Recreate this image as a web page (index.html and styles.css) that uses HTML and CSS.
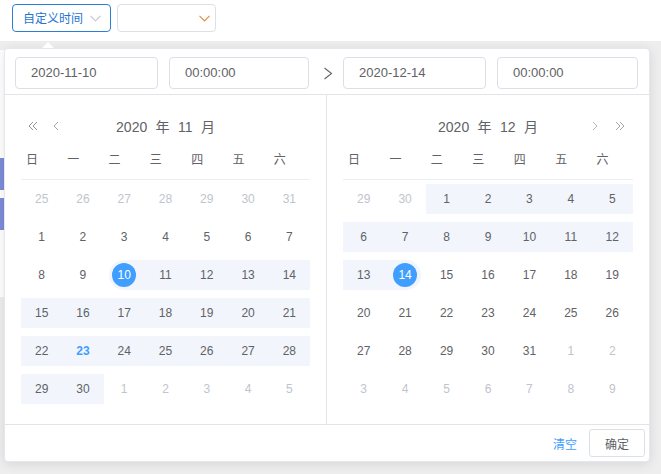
FILE: index.html
```html
<!DOCTYPE html>
<html lang="zh-CN">
<head>
<meta charset="utf-8">
<title>日期范围选择</title>
<link rel="stylesheet" href="styles.css">
</head>
<body>
<div class="toolbar">
  <button class="sel sel-active"><span>自定义时间</span><svg class="chev" width="11" height="7" viewBox="0 0 11 7"><path d="M0.5 0.8 L5.5 5.8 L10.5 0.8" fill="none" stroke="#c0c4cc" stroke-width="1.1"/></svg></button>
  <button class="sel sel-empty"><svg class="chev" width="11" height="7" viewBox="0 0 11 7"><path d="M0.5 0.8 L5.5 5.8 L10.5 0.8" fill="none" stroke="#e0913e" stroke-width="1.2"/></svg></button>
</div>
<div class="stage">
  <div class="page-card">
    <div class="pc-bar"></div>
    <div class="pc-bar"></div>
  </div>
  <div class="picker">
    <div class="arrow"></div>
    <div class="editors">
      <div class="ed-group">
        <div class="ed ed-date">2020-11-10</div>
        <div class="ed ed-time">00:00:00</div>
      </div>
      <div class="ed-sep"><svg width="10" height="13" viewBox="0 0 10 13"><path d="M1.5 1 L8.5 6.5 L1.5 12" fill="none" stroke="#606266" stroke-width="1.1"/></svg></div>
      <div class="ed-group">
        <div class="ed ed-date">2020-12-14</div>
        <div class="ed ed-time2">00:00:00</div>
      </div>
    </div>
    <div class="panels">
      <div class="content is-left">
        <div class="cal-head">
          <div class="nav nav-l">
            <svg width="10" height="10" viewBox="0 0 10 10"><path d="M5 1 L1 5 L5 9 M9 1 L5 5 L9 9" fill="none" stroke="#8f9399" stroke-width="1"/></svg>
            <svg width="6" height="10" viewBox="0 0 6 10"><path d="M5 1 L1 5 L5 9" fill="none" stroke="#a3a6ad" stroke-width="1"/></svg>
          </div>
          <div class="cal-title">2020 年 11 月</div>
          <div></div>
        </div>
        <div class="week"><span>日</span><span>一</span><span>二</span><span>三</span><span>四</span><span>五</span><span>六</span></div>
        <div class="days">
          <div class="d o"><div><span>25</span></div></div>
          <div class="d o"><div><span>26</span></div></div>
          <div class="d o"><div><span>27</span></div></div>
          <div class="d o"><div><span>28</span></div></div>
          <div class="d o"><div><span>29</span></div></div>
          <div class="d o"><div><span>30</span></div></div>
          <div class="d o"><div><span>31</span></div></div>

          <div class="d"><div><span>1</span></div></div>
          <div class="d"><div><span>2</span></div></div>
          <div class="d"><div><span>3</span></div></div>
          <div class="d"><div><span>4</span></div></div>
          <div class="d"><div><span>5</span></div></div>
          <div class="d"><div><span>6</span></div></div>
          <div class="d"><div><span>7</span></div></div>

          <div class="d"><div><span>8</span></div></div>
          <div class="d"><div><span>9</span></div></div>
          <div class="d r s"><div><span>10</span></div></div>
          <div class="d r"><div><span>11</span></div></div>
          <div class="d r"><div><span>12</span></div></div>
          <div class="d r"><div><span>13</span></div></div>
          <div class="d r"><div><span>14</span></div></div>

          <div class="d r"><div><span>15</span></div></div>
          <div class="d r"><div><span>16</span></div></div>
          <div class="d r"><div><span>17</span></div></div>
          <div class="d r"><div><span>18</span></div></div>
          <div class="d r"><div><span>19</span></div></div>
          <div class="d r"><div><span>20</span></div></div>
          <div class="d r"><div><span>21</span></div></div>

          <div class="d r"><div><span>22</span></div></div>
          <div class="d r t"><div><span>23</span></div></div>
          <div class="d r"><div><span>24</span></div></div>
          <div class="d r"><div><span>25</span></div></div>
          <div class="d r"><div><span>26</span></div></div>
          <div class="d r"><div><span>27</span></div></div>
          <div class="d r"><div><span>28</span></div></div>

          <div class="d r"><div><span>29</span></div></div>
          <div class="d r"><div><span>30</span></div></div>
          <div class="d o"><div><span>1</span></div></div>
          <div class="d o"><div><span>2</span></div></div>
          <div class="d o"><div><span>3</span></div></div>
          <div class="d o"><div><span>4</span></div></div>
          <div class="d o"><div><span>5</span></div></div>
        </div>
      </div>
      <div class="content is-right">
        <div class="cal-head">
          <div></div>
          <div class="cal-title">2020 年 12 月</div>
          <div class="nav nav-r">
            <svg width="6" height="10" viewBox="0 0 6 10"><path d="M1 1 L5 5 L1 9" fill="none" stroke="#b4b7bd" stroke-width="1"/></svg>
            <svg width="10" height="10" viewBox="0 0 10 10"><path d="M1 1 L5 5 L1 9 M5 1 L9 5 L5 9" fill="none" stroke="#a3a6ad" stroke-width="1"/></svg>
          </div>
        </div>
        <div class="week"><span>日</span><span>一</span><span>二</span><span>三</span><span>四</span><span>五</span><span>六</span></div>
        <div class="days">
          <div class="d o"><div><span>29</span></div></div>
          <div class="d o"><div><span>30</span></div></div>
          <div class="d r"><div><span>1</span></div></div>
          <div class="d r"><div><span>2</span></div></div>
          <div class="d r"><div><span>3</span></div></div>
          <div class="d r"><div><span>4</span></div></div>
          <div class="d r"><div><span>5</span></div></div>

          <div class="d r"><div><span>6</span></div></div>
          <div class="d r"><div><span>7</span></div></div>
          <div class="d r"><div><span>8</span></div></div>
          <div class="d r"><div><span>9</span></div></div>
          <div class="d r"><div><span>10</span></div></div>
          <div class="d r"><div><span>11</span></div></div>
          <div class="d r"><div><span>12</span></div></div>

          <div class="d r"><div><span>13</span></div></div>
          <div class="d r e"><div><span>14</span></div></div>
          <div class="d"><div><span>15</span></div></div>
          <div class="d"><div><span>16</span></div></div>
          <div class="d"><div><span>17</span></div></div>
          <div class="d"><div><span>18</span></div></div>
          <div class="d"><div><span>19</span></div></div>

          <div class="d"><div><span>20</span></div></div>
          <div class="d"><div><span>21</span></div></div>
          <div class="d"><div><span>22</span></div></div>
          <div class="d"><div><span>23</span></div></div>
          <div class="d"><div><span>24</span></div></div>
          <div class="d"><div><span>25</span></div></div>
          <div class="d"><div><span>26</span></div></div>

          <div class="d"><div><span>27</span></div></div>
          <div class="d"><div><span>28</span></div></div>
          <div class="d"><div><span>29</span></div></div>
          <div class="d"><div><span>30</span></div></div>
          <div class="d"><div><span>31</span></div></div>
          <div class="d o"><div><span>1</span></div></div>
          <div class="d o"><div><span>2</span></div></div>

          <div class="d o"><div><span>3</span></div></div>
          <div class="d o"><div><span>4</span></div></div>
          <div class="d o"><div><span>5</span></div></div>
          <div class="d o"><div><span>6</span></div></div>
          <div class="d o"><div><span>7</span></div></div>
          <div class="d o"><div><span>8</span></div></div>
          <div class="d o"><div><span>9</span></div></div>
        </div>
      </div>
    </div>
    <div class="footer">
      <span class="link-btn">清空</span>
      <button class="ok-btn">确定</button>
    </div>
  </div>
</div>
</body>
</html>
```
FILE: styles.css
```css
* { box-sizing: border-box; }

html, body {
  margin: 0;
  padding: 0;
}

body {
  width: 661px;
  height: 474px;
  overflow: hidden;
  background: #fff;
  color: #606266;
  font-family: "Liberation Sans", "Noto Sans CJK SC", sans-serif;
}

/* top toolbar */
.toolbar {
  height: 41px;
  padding: 4px 0 0 12px;
  display: flex;
  gap: 6px;
  align-items: flex-start;
  background: #fff;
}

.sel {
  height: 28px;
  width: 99px;
  margin: 0;
  border: 1px solid #dcdfe6;
  border-radius: 4px;
  background: #fff;
  display: flex;
  align-items: center;
  font-family: "Noto Sans CJK SC", sans-serif;
  font-size: 12px;
  line-height: 1;
}

.sel-active {
  border-color: #2a7fd6;
  color: #1f74d0;
  padding: 0 0 0 10px;
  gap: 7px;
}

.sel-empty {
  justify-content: flex-end;
  padding: 0 5px 0 0;
}

.chev { display: block; }

/* gray page area */
.stage {
  position: relative;
  height: 433px;
  padding-top: 9px;
  background: #eeeeee;
}

.page-card {
  width: 30px;
  height: 247px;
  padding-top: 108px;
  background: #fff;
  display: flex;
  flex-direction: column;
  gap: 8px;
}

.pc-bar {
  height: 32px;
  background: #7e8bd9;
}

/* picker popup */
.picker {
  position: absolute;
  top: 7px;
  left: 4px;
  width: 646px;
  background: #fff;
  border: 1px solid #e4e7ed;
  border-radius: 4px;
  box-shadow: 0 2px 12px 0 rgba(0, 0, 0, 0.1);
}

.arrow {
  position: absolute;
  top: -7px;
  left: 37px;
  width: 0;
  height: 0;
  border-left: 6px solid transparent;
  border-right: 6px solid transparent;
  border-bottom: 6px solid #fff;
}

.editors {
  display: flex;
  align-items: center;
  padding: 8px 11px 5px 10px;
  border-bottom: 1px solid #e4e4e4;
}

.ed-group {
  display: flex;
  gap: 11px;
}

.ed {
  height: 32px;
  border: 1px solid #dcdfe6;
  border-radius: 4px;
  padding: 0 15px;
  font-size: 13px;
  line-height: 30px;
  color: #606266;
  white-space: nowrap;
}

.ed-date { width: 143px; }
.ed-time { width: 140px; }
.ed-time2 { width: 141px; }

.ed-sep {
  width: 34px;
  display: flex;
  justify-content: center;
  padding-left: 3px;
}

.ed-sep svg { display: block; }

.panels {
  display: flex;
}

.content {
  width: 50%;
  padding: 16px;
}

.content.is-left {
  border-right: 1px solid #e4e4e4;
}

.cal-head {
  height: 28px;
  display: grid;
  grid-template-columns: 1fr auto 1fr;
  align-items: center;
}

.cal-title {
  font-size: 14px;
  word-spacing: 4.5px;
  line-height: 28px;
  padding-top: 2px;
  white-space: pre;
  color: #606266;
}

.nav {
  display: flex;
  align-items: center;
}

.nav svg { display: block; }

.nav-l {
  gap: 15px;
  padding-left: 7px;
}

.nav-r {
  justify-content: flex-end;
  gap: 17px;
  padding-right: 8px;
}

.week {
  display: grid;
  grid-template-columns: repeat(7, 1fr);
  border-bottom: 1px solid #ebeef5;
}

.week span {
  padding: 5px;
  height: 40px;
  line-height: 30px;
  font-size: 12px;
  text-align: left;
  font-family: "Noto Sans CJK SC", sans-serif;
}

.days {
  display: grid;
  grid-template-columns: repeat(7, 1fr);
  font-size: 12px;
}

.d {
  height: 38px;
  padding: 4px 0;
}

.d > div {
  height: 30px;
  padding: 3px 0;
}

.d span {
  display: block;
  width: 24px;
  height: 24px;
  line-height: 24px;
  margin: 0 auto;
  border-radius: 50%;
  text-align: center;
}

.d.o { color: #c0c4cc; }

.d.r > div { background: #f2f6fc; }

.d.s > div {
  margin-left: 5px;
  border-radius: 15px 0 0 15px;
}

.d.s span {
  margin-left: calc((100% + 5px) / 2 - 17px);
}

.d.e > div {
  margin-right: 5px;
  border-radius: 0 15px 15px 0;
}

.d.e span {
  margin-left: calc((100% + 5px) / 2 - 12px);
}

.d.s span,
.d.e span {
  background: #409eff;
  color: #fff;
}

.d.t span {
  color: #409eff;
  font-weight: bold;
}

.footer {
  border-top: 1px solid #e4e4e4;
  padding: 4px;
  display: flex;
  justify-content: flex-end;
  align-items: center;
  gap: 12px;
}

.link-btn {
  font-family: "Noto Sans CJK SC", sans-serif;
  font-size: 12px;
  color: #409eff;
}

.ok-btn {
  width: 56px;
  height: 28px;
  margin: 0;
  padding: 0;
  border: 1px solid #dcdfe6;
  border-radius: 3px;
  background: #fff;
  color: #606266;
  font-family: "Noto Sans CJK SC", sans-serif;
  font-size: 12px;
}
```
